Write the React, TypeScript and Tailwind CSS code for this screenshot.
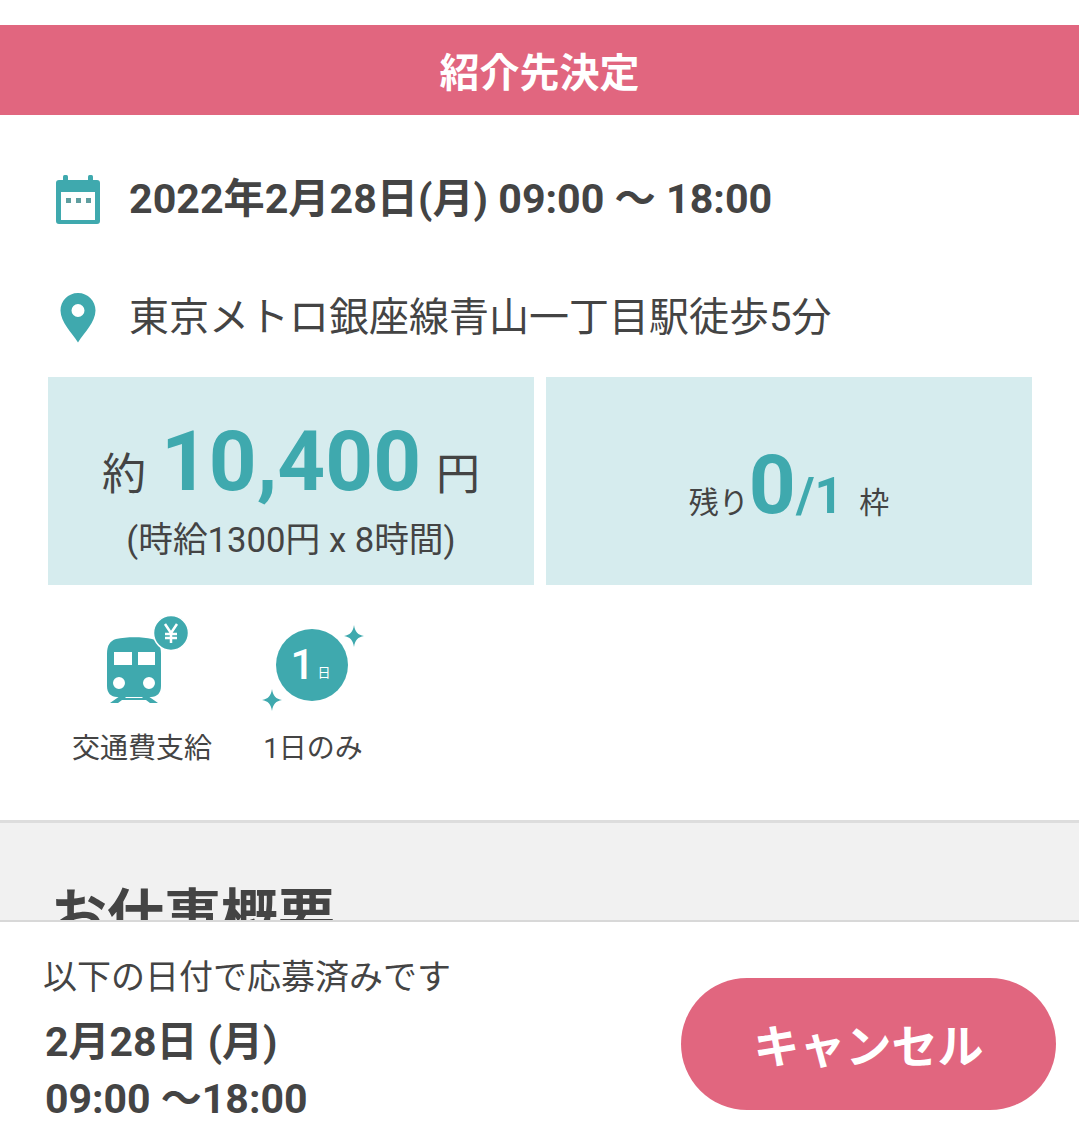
import React from "react"

const font = { fontFamily: 'Roboto, "Noto Sans CJK JP", sans-serif' }

function CalendarIcon() {
  return (
    <svg width="46" height="52" viewBox="0 0 46 52">
      <rect x="8" y="1" width="5" height="8" rx="1.5" fill="#3fa9ae" />
      <rect x="33" y="1" width="5" height="8" rx="1.5" fill="#3fa9ae" />
      <path fillRule="evenodd" fill="#3fa9ae" d="M4 6h38a3 3 0 0 1 3 3v38a3 3 0 0 1-3 3H4a3 3 0 0 1-3-3V9a3 3 0 0 1 3-3zM6 18v28h34V18z" />
      <rect x="11" y="24" width="5" height="5" fill="#5f9ea0" />
      <rect x="21" y="24" width="5" height="5" fill="#5f9ea0" />
      <rect x="31" y="24" width="5" height="5" fill="#5f9ea0" />
    </svg>
  )
}

function PinIcon() {
  return (
    <svg width="36" height="50" viewBox="0 0 36 50">
      <path fillRule="evenodd" fill="#3fa9ae" d="M18 0C8 0 .5 8 .5 17.500 .5 29 12 40 18 49.500 24 40 35.500 29 35.500 17.500 35.500 8 28 0 18 0zM18 11a6.500 6.500 0 1 1 0 13 6.500 6.500 0 0 1 0-13z" />
    </svg>
  )
}

function TrainIcon() {
  return (
    <svg width="84" height="88" viewBox="0 0 84 88">
      <path fillRule="evenodd" fill="#3fa9ae" d="M1 38c0-9 3-13 9-15 11-2.500 26-2.500 36 0 6 2 9 6 9 15v32c0 7-4 11-10 11H11c-6 0-10-4-10-11zM8 36v13h18V36zM32 36v13h17V36zM13 61a6 6 0 1 0 0 12 6 6 0 0 0 0-12zM43 61a6 6 0 1 0 0 12 6 6 0 0 0 0-12z" />
      <path fill="#3fa9ae" d="M14 80h7l-2 2h18l-2-2h7l10 7H44l-4-3H16l-4 3H4z" />
      <circle cx="65" cy="17" r="17.500" fill="#3fa9ae" stroke="#fff" strokeWidth="1.500" />
      <path stroke="#fff" strokeWidth="2.500" fill="none" d="M59 8l6 9 6-9M65 17v10M59 18h12M59 22h12" />
    </svg>
  )
}

function OneDayBadge() {
  return (
    <div className="relative h-[96px] w-[106px]">
      <div className="absolute left-[16px] top-[4px] flex h-[72px] w-[72px] items-center justify-center rounded-full bg-[#3fa9ae] text-white">
        <span className="text-[42px] font-medium leading-none">1</span>
        <span className="ml-[3px] mr-[3px] mt-[14px] text-[13px] leading-none">日</span>
      </div>
      <svg className="absolute left-0 top-0" width="106" height="96" viewBox="0 0 106 96">
        <path fill="#3fa9ae" d="M94 0c1 7 4 10 10 11-6 1-9 4-10 11-1-7-4-10-10-11 6-1 9-4 10-11z" />
        <path fill="#3fa9ae" d="M12 64c1 7 4 10 10 11-6 1-9 4-10 11-1-7-4-10-10-11 6-1 9-4 10-11z" />
      </svg>
    </div>
  )
}

export default function App() {
  return (
    <div className="relative h-[1123px] overflow-hidden bg-white text-[#444444]" style={font}>
      <div className="pt-[25px]">
        {/* Status header */}
        <div className="flex h-[90px] items-center justify-center bg-[#e1667f] pt-[7px] text-[40px] font-bold text-white">
          紹介先決定
        </div>

        {/* Date and place */}
        <div className="mt-[59px] flex h-[52px] items-center pl-[55px]">
          <CalendarIcon />
          <span className="ml-[28px] text-[41.200px] font-bold">2022年2月28日(月) 09:00 〜 18:00</span>
        </div>
        <div className="mt-[67px] flex h-[50px] items-center pl-[60px]">
          <PinIcon />
          <span className="ml-[33px] text-[40px]">東京メトロ銀座線青山一丁目駅徒歩5分</span>
        </div>

        {/* Pay and slots */}
        <div className="mt-[34px] flex gap-[12px] pl-[48px] pr-[47px]">
          <div className="flex h-[208px] w-[486px] flex-col items-center bg-[#d6ecee]">
            <div className="mt-[35px] flex h-[100px] items-baseline">
              <span className="text-[44px]">約</span>
              <span className="mx-[15px] text-[83.500px] font-bold leading-[100px] text-[#3fa9ae]">10,400</span>
              <span className="text-[44px]">円</span>
            </div>
            <div className="mt-[8px] text-[34.700px] leading-[40px]">(時給1300円 x 8時間)</div>
          </div>
          <div className="flex h-[208px] w-[486px] items-center justify-center bg-[#d6ecee] pt-[8px]">
            <div className="flex items-baseline">
              <span className="text-[30px]">残り</span>
              <span className="text-[82px] font-bold leading-[100px] text-[#3fa9ae]">0</span>
              <span className="text-[50px] font-bold text-[#3fa9ae]">/1</span>
              <span className="ml-[16px] text-[30px]">枠</span>
            </div>
          </div>
        </div>

        {/* Feature tags */}
        <div className="mt-[31px] flex h-[204px] items-start pl-[72px]">
          <div className="flex w-[140px] flex-col items-center">
            <div className="h-[88px] w-[84px] translate-x-[6px]">
              <TrainIcon />
            </div>
            <span className="mt-[25px] text-[28px] leading-[40px]">交通費支給</span>
          </div>
          <div className="ml-[48px] flex w-[106px] flex-col items-center">
            <div className="mt-[9px] h-[79px]">
              <OneDayBadge />
            </div>
            <span className="mt-[25px] text-[28px] leading-[40px]">1日のみ</span>
          </div>
        </div>

        {/* Job summary, cut off by the footer */}
        <div className="h-[400px] border-t-[3px] border-[#dddddd] bg-[#f1f1f1] pl-[50px] pt-[58px]">
          <h2 className="text-[57px] font-bold leading-[72px]">お仕事概要</h2>
        </div>
      </div>

      {/* Sticky footer */}
      <div className="absolute inset-x-0 bottom-0 flex h-[203px] items-start justify-between border-t-[2px] border-[#d8d8d8] bg-white">
        <div className="pl-[43px] pt-[33px]">
          <div className="text-[34px] leading-[44px]">以下の日付で応募済みです</div>
          <div className="mt-[15px] pl-[2px] text-[41px] font-bold leading-[57px]">
            <div>2月28日 (月)</div>
            <div>09:00 〜18:00</div>
          </div>
        </div>
        <button className="mr-[23px] mt-[56px] flex h-[132px] w-[375px] items-center justify-center rounded-full bg-[#e1667f] pt-[6px] text-[46px] font-bold text-white">
          キャンセル
        </button>
      </div>
    </div>
  )
}
